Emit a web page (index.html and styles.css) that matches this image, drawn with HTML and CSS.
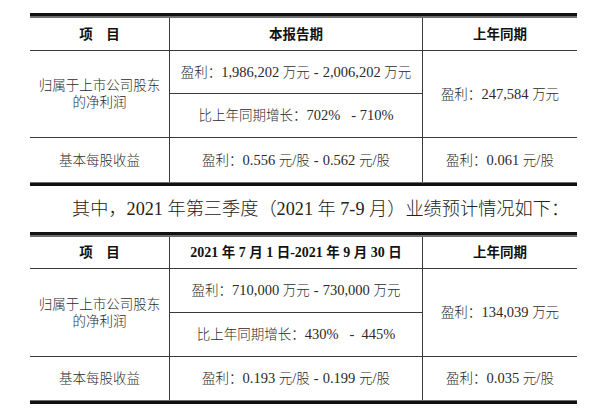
FILE: index.html
```html
<!DOCTYPE html>
<html lang="zh">
<head>
<meta charset="utf-8">
<link rel="stylesheet" href="styles.css">
</head>
<body>
<div class="page">
  <div class="tbl">
    <div class="grid">
      <div class="c h"><div>项&emsp;目</div></div>
      <div class="c h l"><div>本报告期</div></div>
      <div class="c h l"><div>上年同期</div></div>
      <div class="c span2"><div>归属于上市公司股东<br>的净利润</div></div>
      <div class="c l"><div>盈利：<span class="n">1,986,202 </span>万元<span class="n dash">-</span><span class="n">2,006,202 </span>万元</div></div>
      <div class="c l span2"><div>盈利：<span class="n">247,584 </span>万元</div></div>
      <div class="c l"><div>比上年同期增长：<span class="n">702%&nbsp;&nbsp;&nbsp;-&nbsp;710%</span></div></div>
      <div class="c last"><div>基本每股收益</div></div>
      <div class="c l last"><div>盈利：<span class="n">0.556 </span>元<span class="n">/</span>股<span class="n dash">-</span><span class="n">0.562 </span>元<span class="n">/</span>股</div></div>
      <div class="c l last"><div>盈利：<span class="n">0.061 </span>元<span class="n">/</span>股</div></div>
    </div>
  </div>
  <p class="para">其中，2021 年第三季度（2021 年 7-9 月）业绩预计情况如下：</p>
  <div class="tbl">
    <div class="grid g2">
      <div class="c h"><div>项&emsp;目</div></div>
      <div class="c h l"><div><span class="hn">2021 </span>年<span class="hn"> 7 </span>月<span class="hn"> 1 </span>日<span class="hn">-2021 </span>年<span class="hn"> 9 </span>月<span class="hn"> 30 </span>日</div></div>
      <div class="c h l"><div>上年同期</div></div>
      <div class="c span2"><div>归属于上市公司股东<br>的净利润</div></div>
      <div class="c l"><div>盈利：<span class="n">710,000 </span>万元<span class="n dash">-</span><span class="n">730,000 </span>万元</div></div>
      <div class="c l span2"><div>盈利：<span class="n">134,039 </span>万元</div></div>
      <div class="c l"><div>比上年同期增长：<span class="n">430%&nbsp;&nbsp;&nbsp;-&nbsp;&nbsp;445%</span></div></div>
      <div class="c last"><div>基本每股收益</div></div>
      <div class="c l last"><div>盈利：<span class="n">0.193 </span>元<span class="n">/</span>股<span class="n dash">-</span><span class="n">0.199 </span>元<span class="n">/</span>股</div></div>
      <div class="c l last"><div>盈利：<span class="n">0.035 </span>元<span class="n">/</span>股</div></div>
    </div>
  </div>
</div>
</body>
</html>
```

FILE: styles.css
```css
html, body {
  margin: 0;
  padding: 0;
  background: #ffffff;
}

.page {
  padding: 13px 0 0 30px;
  font-family: "Liberation Serif", "Noto Sans CJK SC", serif;
  font-size: 13.5px;
  font-weight: 300;
  color: #2a2a2a;
}

.tbl {
  width: 547px;
  border-top: 3px solid #111;
  border-bottom: 3px solid #111;
}

.grid {
  display: grid;
  grid-template-columns: 139px 253px 155px;
  grid-template-rows: 33px 43px 44px 44px;
  border-top: 2px solid #6e6e6e;
  border-bottom: 1px solid #6e6e6e;
}

.g2 {
  grid-template-rows: 32px 44px 44px 43px;
}

.c {
  box-sizing: border-box;
  display: flex;
  align-items: center;
  justify-content: center;
  text-align: center;
  border-bottom: 1px solid #3a3a3a;
  line-height: 17px;
  white-space: nowrap;
}

.c.last {
  border-bottom: none;
}

.l {
  border-left: 1px solid #3a3a3a;
}

.span2 {
  grid-row: span 2;
}

.n {
  font-size: 14.5px;
  font-weight: 400;
}

.h {
  font-weight: bold;
  color: #111;
}

.hn {
  font-size: 14px;
}

.dash {
  display: inline-block;
  padding: 0 4px;
}

.para {
  margin: 0;
  height: 46px;
  line-height: 46px;
  padding-left: 42px;
  font-size: 18.2px;
  color: #222;
}
```
